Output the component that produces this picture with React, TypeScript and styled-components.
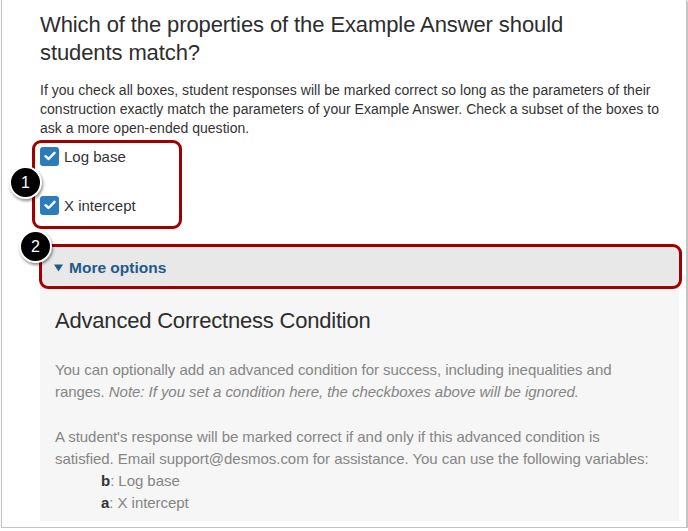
import React from "react";
import styled, { createGlobalStyle } from "styled-components";

const GlobalStyle = createGlobalStyle`
  body {
    margin: 0;
    background: #ffffff;
    font-family: "Liberation Sans", Arial, sans-serif;
  }
`;

const Frame = styled.div`
  position: relative;
  box-sizing: border-box;
  margin-left: 1px;
  width: 686px;
  height: 528px;
  background: #ffffff;
  border: 1px solid #c4c4c4;
  border-top: none;
  box-shadow: 1px 1px 2px rgba(0, 0, 0, 0.35);
`;

const Content = styled.div`
  padding: 11px 5px 4px 38px;
`;

const Title = styled.h2`
  margin: 0;
  font-size: 22px;
  line-height: 28px;
  font-weight: 400;
  color: #2d2d2d;
  letter-spacing: -0.1px;
`;

const Intro = styled.p`
  margin: 14px 0 0;
  font-size: 14px;
  line-height: 19px;
  color: #333333;
  letter-spacing: 0.02px;
  white-space: nowrap;
`;

const Checks = styled.div`
  display: flex;
  flex-direction: column;
  gap: 25px;
  margin-top: 6px;
`;

const CheckRow = styled.label`
  display: flex;
  align-items: center;
  gap: 5px;
  height: 24px;
  font-size: 15px;
  color: #333333;
`;

const Box = styled.span`
  display: flex;
  align-items: center;
  justify-content: center;
  width: 19px;
  height: 19px;
  border-radius: 3px;
  background: #2c7bbd;
`;

const Options = styled.div`
  margin-top: 30px;
  width: 639px;
`;

const Bar = styled.div`
  display: flex;
  align-items: center;
  gap: 6px;
  height: 42px;
  padding-left: 14px;
  background: #e8e8e8;
  font-size: 15.5px;
  font-weight: 700;
  color: #1f5a8c;
`;

const Panel = styled.div`
  padding: 18px 15px 7px;
  background: #f6f6f6;
`;

const PanelTitle = styled.h3`
  margin: 0;
  font-size: 22px;
  line-height: 28px;
  font-weight: 400;
  color: #2d2d2d;
  letter-spacing: -0.2px;
`;

const PanelText = styled.p<{ $gap: number }>`
  margin: ${(p) => p.$gap}px 0 0;
  font-size: 15px;
  line-height: 22px;
  color: #858585;
  letter-spacing: -0.05px;
  white-space: nowrap;
`;

const VarList = styled.ul`
  margin: 0;
  padding: 0 0 0 46px;
  list-style: none;
  font-size: 15px;
  line-height: 22px;
  color: #858585;
  letter-spacing: -0.05px;

  b {
    color: #333333;
  }
`;

const Outline = styled.div<{ $x: number; $y: number; $w: number; $h: number }>`
  position: absolute;
  left: ${(p) => p.$x}px;
  top: ${(p) => p.$y}px;
  width: ${(p) => p.$w}px;
  height: ${(p) => p.$h}px;
  box-sizing: border-box;
  border: 3px solid #a00000;
  border-radius: 9px;
`;

const Badge = styled.div<{ $x: number; $y: number }>`
  position: absolute;
  left: ${(p) => p.$x}px;
  top: ${(p) => p.$y}px;
  width: 29px;
  height: 29px;
  display: flex;
  align-items: center;
  justify-content: center;
  border-radius: 50%;
  background: #000000;
  border: 2px solid #ffffff;
  box-shadow: 1px 2px 3px rgba(0, 0, 0, 0.45);
  color: #ffffff;
  font-size: 16px;
`;

const Check = () => (
  <svg width="12" height="10" viewBox="0 0 12 10">
    <path d="M1.5 5.2 L4.6 8 L10.5 1.8" fill="none" stroke="#ffffff" strokeWidth="2.4" strokeLinecap="round" strokeLinejoin="round" />
  </svg>
);

const Caret = () => (
  <svg width="9" height="8" viewBox="0 0 9 8">
    <path d="M0 0.5 H9 L4.5 7.5 Z" fill="#1f5a8c" />
  </svg>
);

export default function App() {
  return (
    <>
      <GlobalStyle />
      <Frame>
        <Content>
          <Title>
            Which of the properties of the Example Answer should
            <br />
            students match?
          </Title>
          <Intro>
            If you check all boxes, student responses will be marked correct so long as the parameters of their
            <br />
            construction exactly match the parameters of your Example Answer. Check a subset of the boxes to
            <br />
            ask a more open-ended question.
          </Intro>
          <Checks>
            <CheckRow>
              <Box>
                <Check />
              </Box>
              Log base
            </CheckRow>
            <CheckRow>
              <Box>
                <Check />
              </Box>
              X intercept
            </CheckRow>
          </Checks>
          <Options>
            <Bar>
              <Caret />
              More options
            </Bar>
            <Panel>
              <PanelTitle>Advanced Correctness Condition</PanelTitle>
              <PanelText $gap={24}>
                You can optionally add an advanced condition for success, including inequalities and
                <br />
                ranges. <i>Note: If you set a condition here, the checkboxes above will be ignored.</i>
              </PanelText>
              <PanelText $gap={23}>
                A student's response will be marked correct if and only if this advanced condition is
                <br />
                satisfied. Email support@desmos.com for assistance. You can use the following variables:
              </PanelText>
              <VarList>
                <li>
                  <b>b</b>: Log base
                </li>
                <li>
                  <b>a</b>: X intercept
                </li>
              </VarList>
            </Panel>
          </Options>
        </Content>
        <Outline $x={30} $y={140} $w={150} $h={89} />
        <Outline $x={37} $y={244} $w={643} $h={45} />
        <Badge $x={7} $y={166}>1</Badge>
        <Badge $x={17} $y={230}>2</Badge>
      </Frame>
    </>
  );
}
